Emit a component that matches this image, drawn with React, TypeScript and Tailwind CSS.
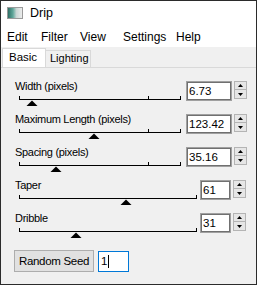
import React from "react";

type RowProps = {
  label: string;
  value: string;
  thumb: number;
  short?: boolean;
};

function Slider({ thumb, short }: { thumb: number; short?: boolean }) {
  const w = short ? 184 : 168;
  const end = short ? 182 : 166;
  const c = thumb - 14;
  return (
    <svg width={w} height={14} className="block ml-[13px]" shapeRendering="crispEdges">
      <rect x={5} y={6} width={end - 5 + 1} height={1} fill="#000" />
      <rect x={5} y={3} width={1} height={4} fill="#000" />
      <rect x={end} y={3} width={1} height={4} fill="#000" />
      {!short && <rect x={134} y={3} width={1} height={4} fill="#000" />}
      <polygon points={`${c - 5.5},13 ${c},7.5 ${c + 5.5},13`} fill="#000" shapeRendering="auto" />
    </svg>
  );
}

function Spinner() {
  return (
    <div className="ml-[2px] mt-[1px] w-[13px] flex flex-col">
      <div className="h-[9px] bg-[#e6e6e6] border border-[#b4b4b4] flex items-center justify-center">
        <svg width={5} height={3} className="block">
          <polygon points="0,3 2.5,0 5,3" fill="#000" />
        </svg>
      </div>
      <div className="h-[9px] bg-[#e6e6e6] border border-t-0 border-[#b4b4b4] flex items-center justify-center">
        <svg width={5} height={3} className="block">
          <polygon points="0,0 2.5,3 5,0" fill="#000" />
        </svg>
      </div>
    </div>
  );
}

function Row({ label, value, thumb, short }: RowProps) {
  return (
    <div className="h-[33px] flex items-start">
      <div className={short ? "w-[199px] shrink-0" : "w-[185px] shrink-0"}>
        <div className="pl-[14px] text-[11px] leading-[13px] tracking-[-0.3px] text-black whitespace-nowrap">
          {label}
        </div>
        <Slider thumb={thumb} short={short} />
      </div>
      <div
        className={
          (short ? "w-[31px]" : "w-[46px]") +
          " mt-[1px] h-[20px] border border-[#a0a0a0] bg-white shadow-[inset_0_0_0_1px_#707070] pl-[2px] text-[11.5px] leading-[18px] text-black"
        }
      >
        {value}
      </div>
      <Spinner />
    </div>
  );
}

export default function App() {
  return (
    <div className="w-[257px] h-[285px] border border-[#2b2b2b] bg-[#f0f0f0] flex flex-col overflow-hidden font-['Liberation_Sans',Arial,sans-serif] text-black">
      {/* Title bar */}
      <div className="h-[24px] bg-white flex items-center pl-[6px] shrink-0">
        <div className="w-[16px] h-[12px] border border-[#9a9a9a] bg-[linear-gradient(90deg,#2f6f66_0%,#5fa79a_35%,#c9d6d4_60%,#ececec_100%)]" />
        <span className="ml-[7px] text-[12.5px] leading-[14px]">Drip</span>
      </div>
      {/* Menu bar */}
      <div className="h-[22px] bg-white flex items-center pl-[6px] pt-[2px] text-[12px] leading-[14px] shrink-0">
        <span className="w-[34px]">Edit</span>
        <span className="w-[39px]">Filter</span>
        <span className="w-[43px]">View</span>
        <span className="w-[53px]">Settings</span>
        <span>Help</span>
      </div>
      {/* Tabs */}
      <div className="h-[20px] flex items-end pl-[1px] shrink-0">
        <div className="w-[44px] h-[19px] bg-white border-l border-t border-r border-[#d9d9d9] text-[11.5px] leading-[17px] pl-[6px]">
          Basic
        </div>
        <div className="w-[45px] h-[17px] bg-[#f0f0f0] border-t border-r border-[#d9d9d9] text-[11px] leading-[15px] pl-[4px]">
          Lighting
        </div>
      </div>
      {/* Panel */}
      <div className="flex-1 border-t border-[#d9d9d9] pt-[12px]">
        <Row label="Width (pixels)" value="6.73" thumb={32} />
        <Row label="Maximum Length (pixels)" value="123.42" thumb={94} />
        <Row label="Spacing (pixels)" value="35.16" thumb={56} />
        <Row label="Taper" value="61" thumb={126} short />
        <Row label="Dribble" value="31" thumb={76} short />
        <div className="mt-[5px] flex items-start pl-[13px]">
          <div className="w-[80px] h-[22px] bg-[#e1e1e1] border border-[#adadad] text-[11.5px] leading-[20px] tracking-[-0.3px] text-center">
            Random Seed
          </div>
          <div className="ml-[4px] mt-[1px] w-[31px] h-[21px] border border-[#0078d7] bg-white flex items-center pl-[2px] text-[11.5px] leading-[13px]">
            <span>1</span>
            <span className="w-[1px] h-[13px] bg-black ml-[1px]" />
          </div>
        </div>
      </div>
    </div>
  );
}
